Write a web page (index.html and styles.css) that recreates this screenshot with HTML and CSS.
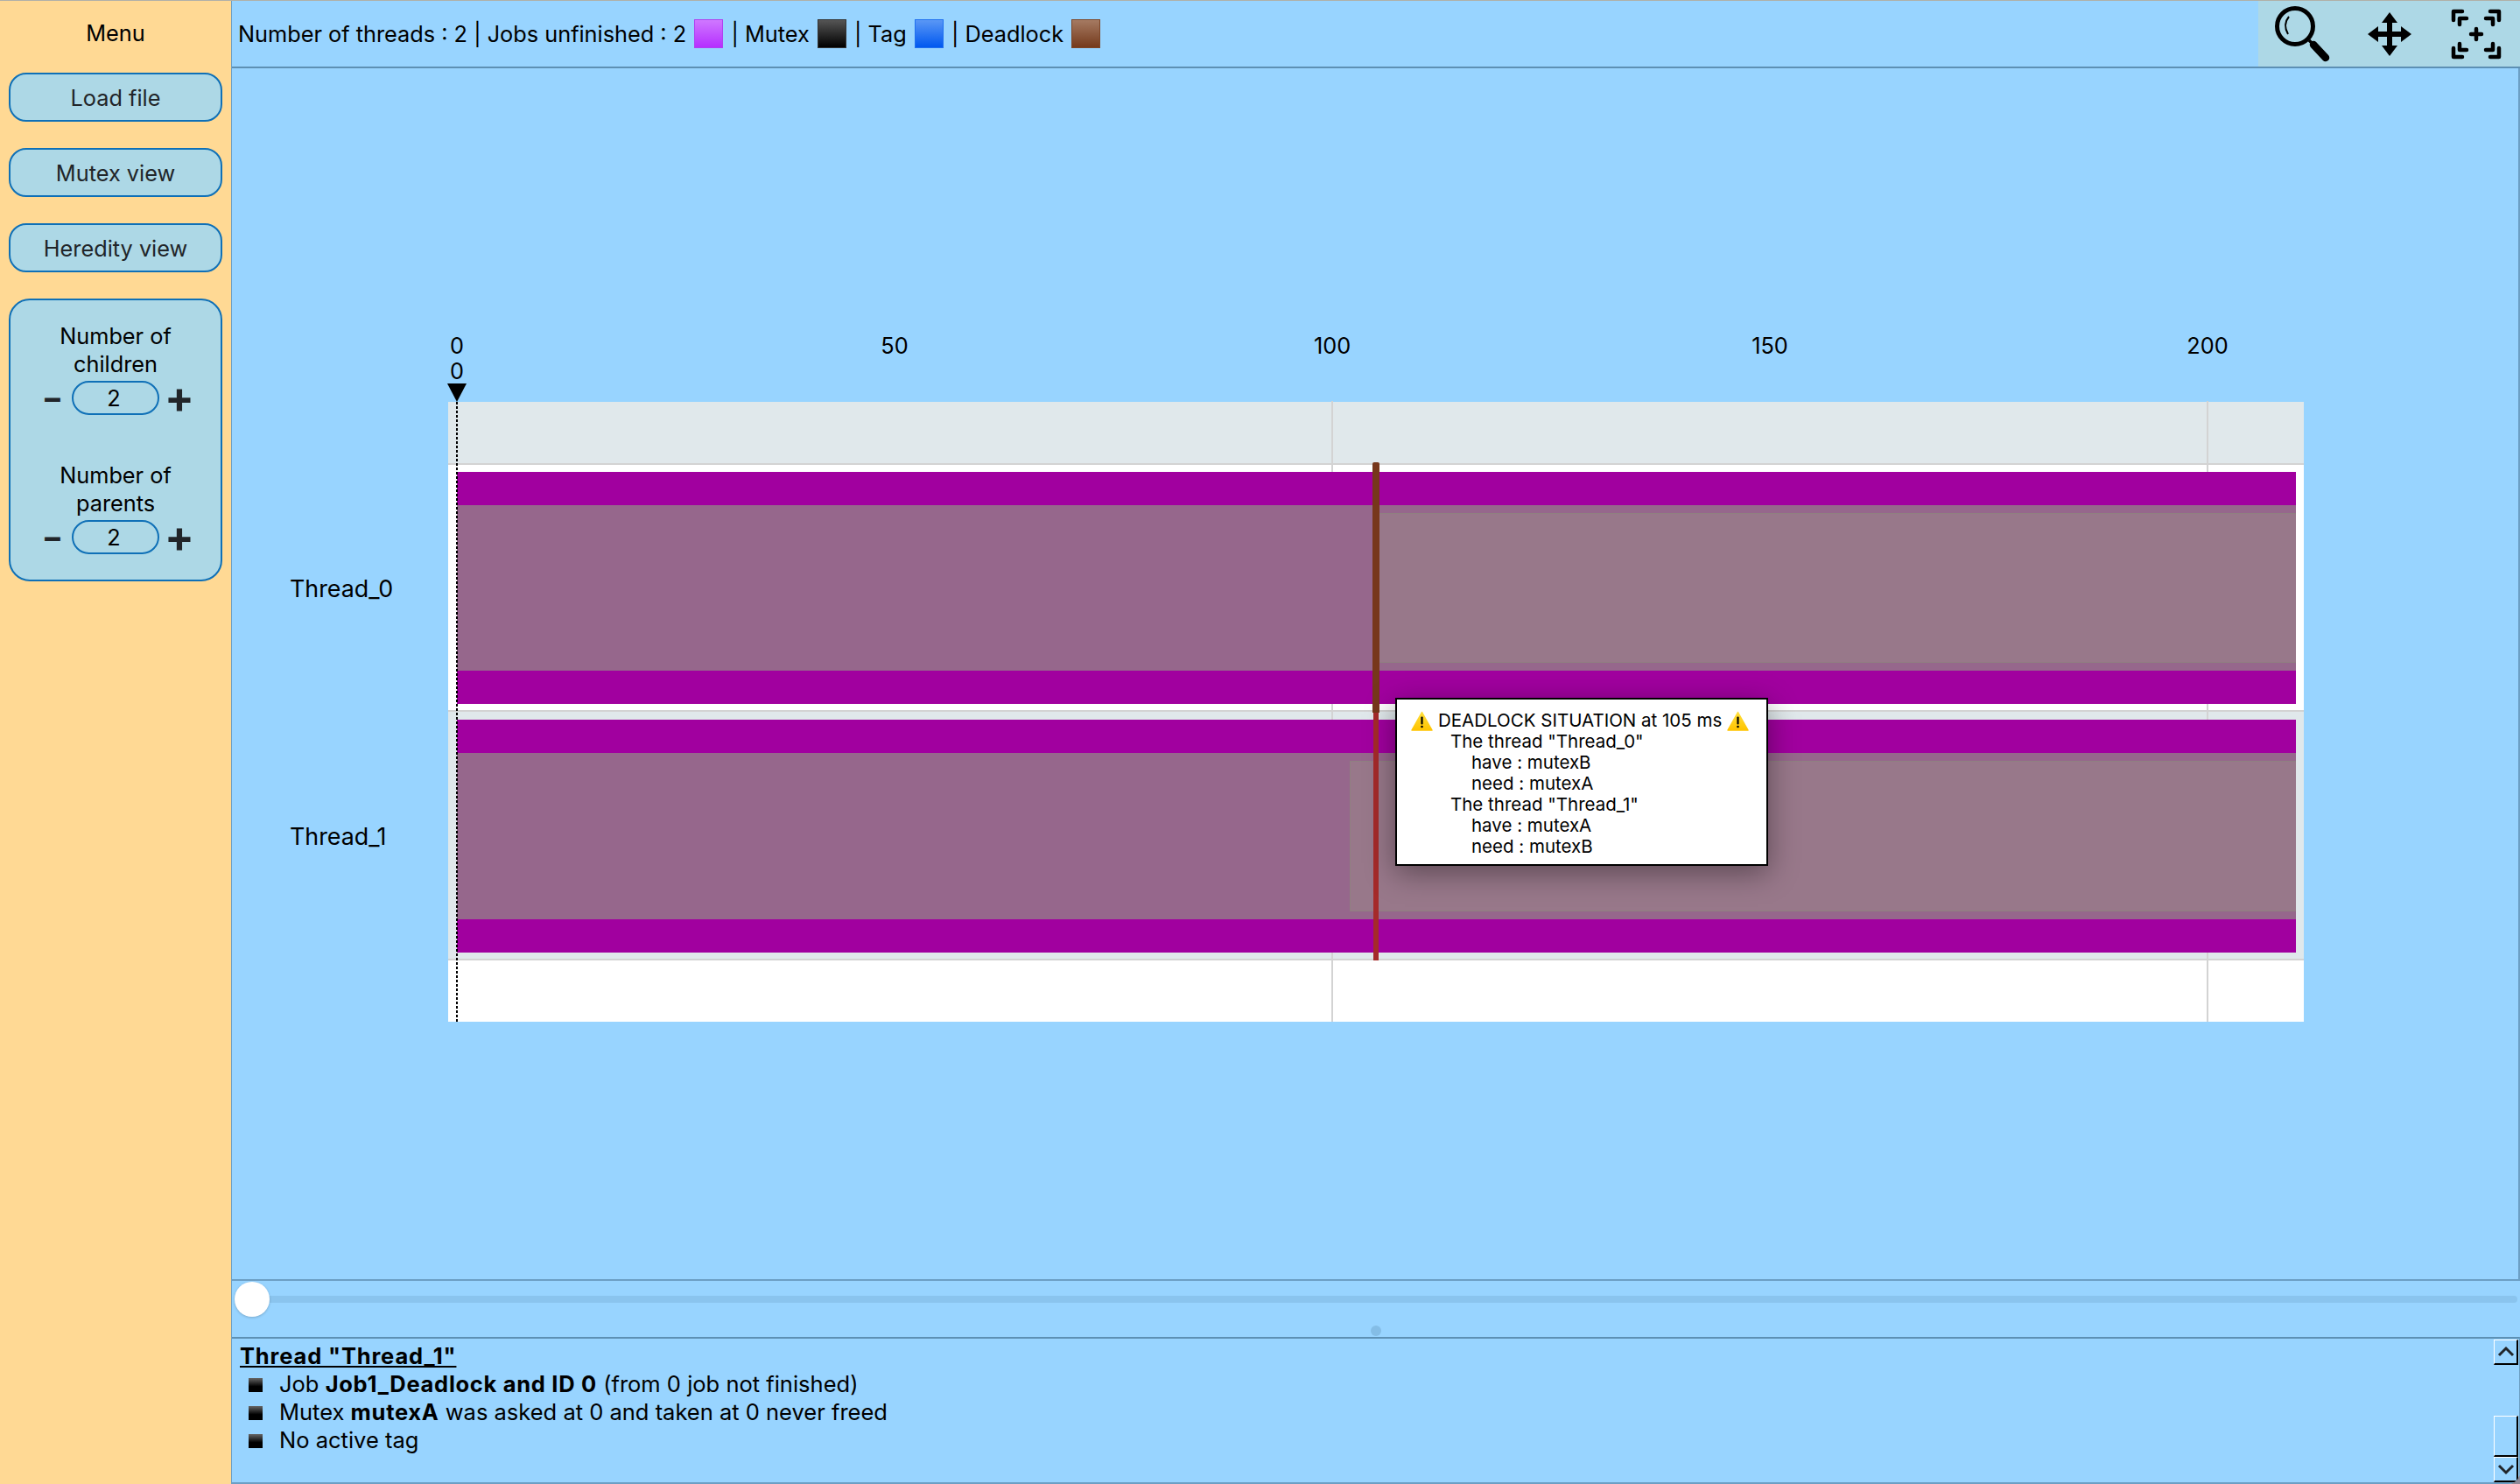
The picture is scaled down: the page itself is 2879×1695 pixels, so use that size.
FILE: index.html
```html
<!DOCTYPE html>
<html lang="en">
<head>
<meta charset="utf-8">
<title>Thread viewer</title>
<link rel="stylesheet" href="styles.css">
</head>
<body>
<div class="app">
  <aside class="sidebar">
    <div class="menu-title">Menu</div>
    <button class="side-btn">Load file</button>
    <button class="side-btn">Mutex view</button>
    <button class="side-btn">Heredity view</button>
    <div class="side-panel">
      <div class="stepper">
        <div class="stepper-label">Number of<br>children</div>
        <div class="stepper-row"><span class="step minus">−</span><span class="pill">2</span><span class="step plus">+</span></div>
      </div>
      <div class="stepper">
        <div class="stepper-label">Number of<br>parents</div>
        <div class="stepper-row"><span class="step minus">−</span><span class="pill">2</span><span class="step plus">+</span></div>
      </div>
    </div>
  </aside>
  <main class="main">
    <header class="header">
      <div class="legend">Number of threads : 2 | Jobs unfinished : 2 <i class="swatch s-job"></i> | Mutex <i class="swatch s-mutex"></i> | Tag <i class="swatch s-tag"></i> | Deadlock <i class="swatch s-dead"></i></div>
      <div class="tools">
        <span class="tool"><svg width="66" height="66" viewBox="0 0 66 66"><circle cx="25" cy="24" r="20.5" fill="none" stroke="#000" stroke-width="5"/><path d="M41 40L48 47" stroke="#000" stroke-width="3.5"/><path d="M46 45L60 60" stroke="#000" stroke-width="8.5" stroke-linecap="round"/><path d="M18 13C13 19 13 26 17 33" fill="none" stroke="#000" stroke-width="2"/></svg></span>
        <span class="tool"><svg width="52" height="52" viewBox="-26 -26 52 52"><path d="M0-25L9-13H3V-3H13V-9L25 0L13 9V3H3V13H9L0 25L-9 13H-3V3H-13V9L-25 0L-13-9V-3H-3V-13H-9Z"/></svg></span>
        <span class="tool"><svg width="60" height="60" viewBox="-30 -30 60 60"><path fill="none" stroke="#000" stroke-width="4.5" stroke-linecap="round" stroke-linejoin="round" d="M-16-26H-26V-16M16-26H26V-16M-16 26H-26V16M16 26H26V16M-11-18H-19V-11M11-18H19V-11M-11 18H-19V11M11 18H19V11M-6 0H6M0-6V6"/></svg></span>
      </div>
    </header>
    <section class="canvas">
      <div class="axis">
        <span class="tick" style="left:10px">0</span>
        <span class="tick" style="left:510px">50</span>
        <span class="tick" style="left:1010px">100</span>
        <span class="tick" style="left:1510px">150</span>
        <span class="tick" style="left:2010px">200</span>
        <span class="tick tick-cursor" style="left:10px">0</span>
      </div>
      <div class="chart">
        <span class="gridline" style="left:1009px"></span>
        <span class="gridline" style="left:2009px"></span>
        <div class="band"></div>
        <div class="row row-a">
          <div class="row-label">Thread_0</div>
          <div class="job"><div class="cap"></div><div class="job-body"><div class="mutex" style="left:1053px"></div></div><div class="cap"></div></div>
        </div>
        <div class="row row-b">
          <div class="row-label">Thread_1</div>
          <div class="job"><div class="cap"></div><div class="job-body"><div class="mutex" style="left:1020px"></div></div><div class="cap"></div></div>
        </div>
        <div class="tail"></div>
        <span class="cursor"></span>
        <span class="cursor-head"></span>
        <span class="dead-line"></span>
        <span class="dead-mark"></span>
        <div class="tooltip">
          <div class="tip-title"><svg class="warn" width="25" height="23" viewBox="0 0 25 23"><defs><linearGradient id="wg" x1="0" y1="0" x2="0" y2="1"><stop offset="0" stop-color="#ffdf3d"/><stop offset="1" stop-color="#ffc400"/></linearGradient></defs><path d="M12.5 1.5L24 22H1Z" fill="url(#wg)" stroke="url(#wg)" stroke-width="1.5" stroke-linejoin="round"/><rect x="11.4" y="6.5" width="2.2" height="9" rx="1"/><circle cx="12.5" cy="18" r="1.3"/></svg><span>DEADLOCK SITUATION at 105 ms</span><svg class="warn" width="25" height="23" viewBox="0 0 25 23"><path d="M12.5 1.5L24 22H1Z" fill="url(#wg)" stroke="url(#wg)" stroke-width="1.5" stroke-linejoin="round"/><rect x="11.4" y="6.5" width="2.2" height="9" rx="1"/><circle cx="12.5" cy="18" r="1.3"/></svg></div>
          <div class="tip-l1">The thread "Thread_0"</div>
          <div class="tip-l2">have : mutexB</div>
          <div class="tip-l2">need : mutexA</div>
          <div class="tip-l1">The thread "Thread_1"</div>
          <div class="tip-l2">have : mutexA</div>
          <div class="tip-l2">need : mutexB</div>
        </div>
      </div>
    </section>
    <section class="slider">
      <span class="track"></span>
      <span class="thumb"></span>
      <span class="grip"></span>
    </section>
    <section class="info">
      <div class="info-text">
        <div class="info-title">Thread "Thread_1"</div>
        <ul class="info-list">
          <li>Job <b>Job1_Deadlock and ID 0</b> (from 0 job not finished)</li>
          <li>Mutex <b>mutexA</b> was asked at 0 and taken at 0 never freed</li>
          <li>No active tag</li>
        </ul>
      </div>
      <div class="scrollbar">
        <span class="sb-btn"><svg width="20" height="14" viewBox="0 0 20 14"><path d="M2 11L10 3L18 11" fill="none" stroke="#212529" stroke-width="3"/></svg></span>
        <span class="sb-thumb"></span>
        <span class="sb-btn"><svg width="20" height="14" viewBox="0 0 20 14"><path d="M2 3L10 11L18 3" fill="none" stroke="#212529" stroke-width="3"/></svg></span>
      </div>
    </section>
  </main>
</div>
</body>
</html>
```
FILE: styles.css
```css
* { box-sizing: border-box; }
html, body { height: 100%; }
body {
  margin: 0;
  background: #8d8a98;
  font-family: Inter, "Liberation Sans", sans-serif;
  font-size: 25.3px;
  color: #000;
  overflow: hidden;
}
.app {
  display: grid;
  grid-template-columns: 264px 1fr;
  height: 1695px;
  border-top: 1px solid #b0b0a8;
  border-bottom-right-radius: 14px;
  overflow: hidden;
}
.sidebar {
  background: #ffd994;
  padding: 0 10px;
  display: flex;
  flex-direction: column;
}
.menu-title {
  height: 82px;
  line-height: 74px;
  text-align: center;
}
.side-btn {
  height: 56px;
  margin-bottom: 30px;
  background: #add8e6;
  border: 2px solid #0f70b7;
  border-radius: 20px;
  font: inherit;
  color: #212529;
  padding: 0;
}
.side-panel {
  height: 323px;
  background: #add8e6;
  border: 2px solid #0f70b7;
  border-radius: 24px;
  padding: 25px 0 0;
  text-align: center;
}
.stepper { height: 159px; }
.stepper-label { line-height: 32px; }
.stepper-row {
  display: flex;
  align-items: center;
  height: 40px;
  margin-top: 2px;
  padding-left: 33px;
}
.step { font-weight: 700; color: #212529; line-height: 40px; text-align: center; }
.minus { width: 30px; font-size: 36px; }
.plus { width: 40px; margin-left: 3px; font-size: 50px; }
.pill {
  width: 100px;
  height: 39px;
  line-height: 35px;
  border: 2px solid #0f70b7;
  border-radius: 20px;
  margin-left: 7px;
  padding-right: 4px;
}
.main {
  display: flex;
  flex-direction: column;
  background: #98d4ff;
  border-left: 1px solid #6c9fc4;
  min-width: 0;
}
.header {
  display: flex;
  justify-content: space-between;
  height: 77px;
  border-bottom: 2px solid #5d90b4;
}
.legend {
  padding-left: 7px;
  line-height: 76px;
  white-space: nowrap;
}
.swatch {
  display: inline-block;
  width: 33px;
  height: 33px;
  vertical-align: -7px;
  margin: 0 2px;
}
.s-job { background: linear-gradient(#cf78ff, #b52fff); border: 1px solid #b040f0; }
.s-mutex { background: linear-gradient(#555, #000); border: 1px solid #333; }
.s-tag { background: linear-gradient(#5a97f5, #0058f0); border: 1px solid #2070f0; }
.s-dead { background: linear-gradient(#a57a62, #753a1c); border: 1px solid #7d4527; }
.tools {
  display: flex;
  width: 299px;
  background: #add8e6;
}
.tool {
  flex: 1;
  display: flex;
  align-items: center;
  justify-content: center;
}
.tool svg { display: block; }
.canvas {
  flex: 1;
  display: flex;
  flex-direction: column;
  justify-content: flex-end;
  padding: 0 245px 294px 247px;
  min-height: 0;
  border-right: 2px solid #6c9fc4;
}
.axis {
  position: relative;
  height: 79px;
}
.tick {
  position: absolute;
  top: 0;
  transform: translateX(-50%);
  line-height: 30px;
}
.tick-cursor { top: 29px; }
.chart {
  position: relative;
  width: 2120px;
  background: #fff;
}
.gridline {
  position: absolute;
  top: -1px;
  bottom: 0;
  width: 2px;
  background: #d3d3d3;
  z-index: 1;
}
.band {
  height: 72px;
  background: #e0e8eb;
  border-bottom: 2px solid #d3d3d3;
}
.row {
  position: relative;
  border-bottom: 2px solid #d3d3d3;
  padding: 8px 9px 7px 10px;
}
.row-a { height: 282px; background: #fff; }
.row-b { height: 284px; background: #e0e8eb; padding-top: 9px; }
.row-label {
  position: absolute;
  left: -181px;
  top: 50%;
  transform: translateY(-50%);
  margin-top: 1px;
  font-size: 26.8px;
  white-space: nowrap;
}
.job {
  position: relative;
  z-index: 2;
  display: flex;
  flex-direction: column;
  height: 100%;
}
.cap { height: 38px; background: #a1009f; }
.job-body {
  position: relative;
  flex: 1;
  background: #96678c;
}
.mutex {
  position: absolute;
  top: 9px;
  bottom: 9px;
  right: 0;
  background: #98788a;
  border: 1px solid #8f8080;
  border-right: 0;
}
.tail { height: 70px; }
.cursor {
  position: absolute;
  left: 9px;
  top: 0;
  bottom: 0;
  width: 2px;
  z-index: 3;
  background: repeating-linear-gradient(#000 0 3px, transparent 3px 5px);
}
.cursor-head {
  position: absolute;
  left: -1px;
  top: -21px;
  width: 22px;
  height: 21px;
  background: #000;
  clip-path: polygon(0 0, 100% 0, 50% 100%);
}
.dead-line {
  position: absolute;
  left: 1057px;
  top: 353px;
  width: 6px;
  height: 285px;
  background: #a52a2a;
  z-index: 3;
}
.dead-mark {
  position: absolute;
  left: 1056px;
  top: 69px;
  width: 8px;
  height: 286px;
  background: #77371b;
  border-radius: 2px 2px 0 0;
  z-index: 3;
}
.tooltip {
  position: absolute;
  left: 1082px;
  top: 338px;
  width: 426px;
  height: 192px;
  z-index: 4;
  background: #fff;
  border: 2px solid #000;
  padding: 12px 0 0;
  font-size: 20.5px;
  line-height: 24px;
  box-shadow: 0 8px 32px rgba(0, 0, 0, .4);
}
.tip-title {
  display: flex;
  align-items: center;
  padding-left: 16px;
  white-space: nowrap;
}
.warn { flex: none; display: block; }
.tip-title span { margin: 0 6px; }
.tip-l1 { padding-left: 61px; }
.tip-l2 { padding-left: 85px; }
.slider {
  position: relative;
  height: 66px;
  border-top: 2px solid #6c9fc4;
  flex: none;
}
.track {
  position: absolute;
  left: 18px;
  right: 3px;
  top: 17px;
  height: 8px;
  border-radius: 4px;
  background: #8ac4ee;
}
.thumb {
  position: absolute;
  left: 3px;
  top: 1px;
  width: 40px;
  height: 40px;
  border-radius: 50%;
  background: #fff;
  box-shadow: 0 1px 3px rgba(0, 0, 0, .2);
}
.grip {
  position: absolute;
  left: 1301px;
  top: 51px;
  width: 12px;
  height: 12px;
  border-radius: 50%;
  background: #84bde6;
}
.info {
  flex: none;
  display: flex;
  justify-content: space-between;
  height: 168px;
  border-top: 2px solid #5d90b4;
  border-bottom: 2px solid #6c9fc4;
  border-right: 1px solid #6c9fc4;
  font-size: 25.5px;
}
.info-text { padding: 4px 0 0 9px; line-height: 32px; }
.info-title { font-weight: 700; text-decoration: underline; letter-spacing: .85px; }
.info-list { list-style: none; margin: 0; padding: 0; }
.info-list b { letter-spacing: .7px; }
.info-list li::before {
  content: "";
  display: inline-block;
  width: 16px;
  height: 16px;
  margin: 0 19px 0 10px;
  background: linear-gradient(#666, #000 60%);
}
.scrollbar {
  display: flex;
  flex-direction: column;
  justify-content: space-between;
  width: 29px;
  padding-top: 1px;
}
.sb-btn, .sb-thumb {
  display: flex;
  align-items: center;
  justify-content: center;
  width: 28px;
  border-top: 1px solid #fff;
  border-left: 1px solid #fff;
  border-right: 2px solid #000;
  border-bottom: 2px solid #000;
}
.sb-btn { height: 29px; }
.sb-thumb { height: 47px; margin-top: auto; }
```
